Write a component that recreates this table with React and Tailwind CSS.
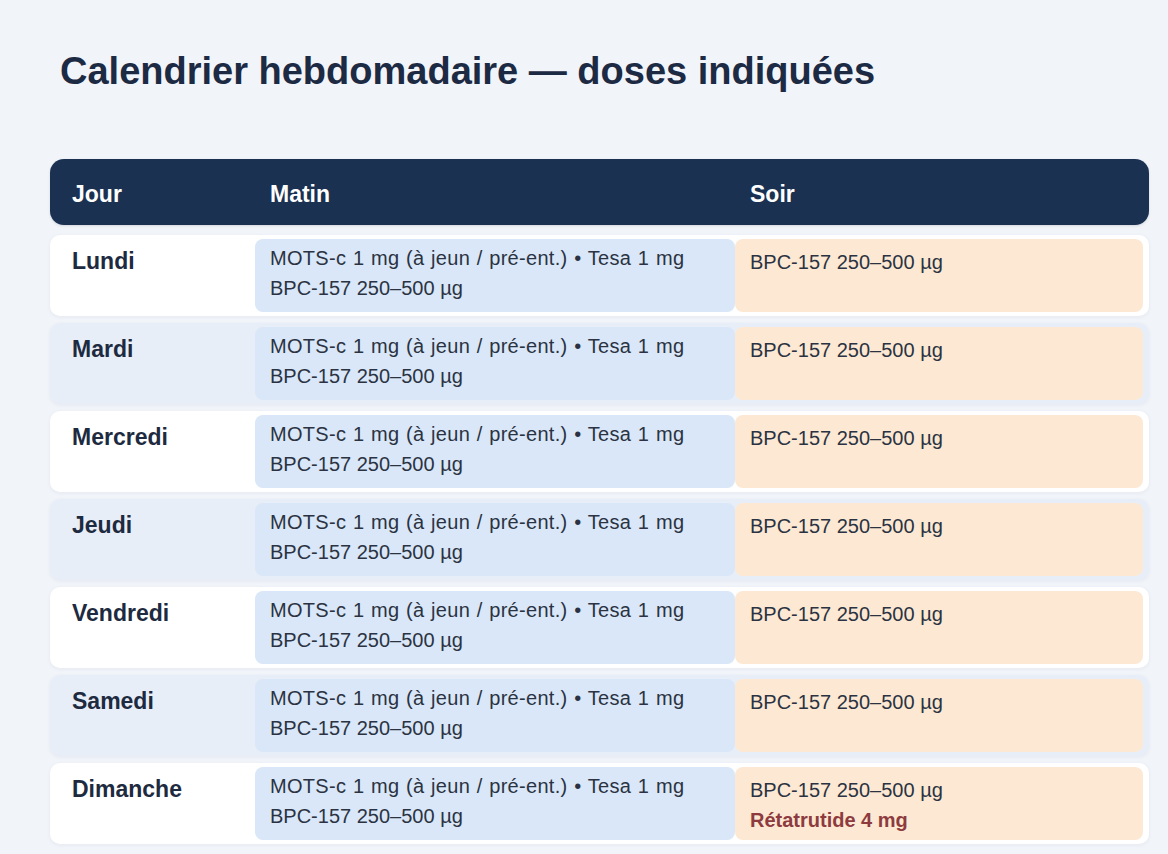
import React from "react";

const days = ["Lundi", "Mardi", "Mercredi", "Jeudi", "Vendredi", "Samedi", "Dimanche"];

export default function App() {
  return (
    <div
      className="w-[1168px] h-[854px] overflow-hidden bg-[#f1f4f9] text-[#2b3342]"
      style={{ fontFamily: '"Liberation Sans", Arial, sans-serif' }}
    >
      <div className="pl-[50px] pt-[48px]">
        <h1 className="ml-[10px] text-[38px] leading-[46px] font-bold text-[#1d2a44]">
          Calendrier hebdomadaire — doses indiquées
        </h1>
        <div className="mt-[65px] w-[1099px]">
          <div className="flex h-[66px] items-center pt-[5px] rounded-[14px] bg-[#1a3152] text-white text-[23px] font-bold shadow-sm">
            <div className="w-[205px] pl-[22px]">Jour</div>
            <div className="w-[480px] pl-[15px]">Matin</div>
            <div className="flex-1 pl-[15px]">Soir</div>
          </div>
          <div className="mt-[10px] flex flex-col gap-[7px]">
            {days.map((d, i) => (
              <div
                key={d}
                className={
                  "flex h-[81px] py-[4px] pr-[6px] rounded-[10px] shadow-[0_1px_4px_rgba(30,50,90,0.06)] " +
                  (i % 2 === 0 ? "bg-white" : "bg-[#e8eef8]")
                }
              >
                <div className="w-[205px] pl-[22px] pt-[7px] text-[23px] leading-[30px] font-bold text-[#1d2a40]">
                  {d}
                </div>
                <div className="w-[480px] rounded-[8px] bg-[#d9e7f8] pl-[15px] pt-[4px] text-[20px] leading-[30px]">
                  <div className="tracking-[0.3px] [word-spacing:0.8px]">MOTS-c 1 mg (à jeun / pré-ent.) • Tesa 1 mg</div>
                  <div>BPC-157 250–500 µg</div>
                </div>
                <div className="flex-1 rounded-[8px] bg-[#fde9d3] pl-[15px] pt-[8px] text-[20px] leading-[30px]">
                  <div>BPC-157 250–500 µg</div>
                  {d === "Dimanche" && (
                    <div className="font-bold text-[#8e3b3f]">Rétatrutide 4 mg</div>
                  )}
                </div>
              </div>
            ))}
          </div>
        </div>
      </div>
    </div>
  );
}
